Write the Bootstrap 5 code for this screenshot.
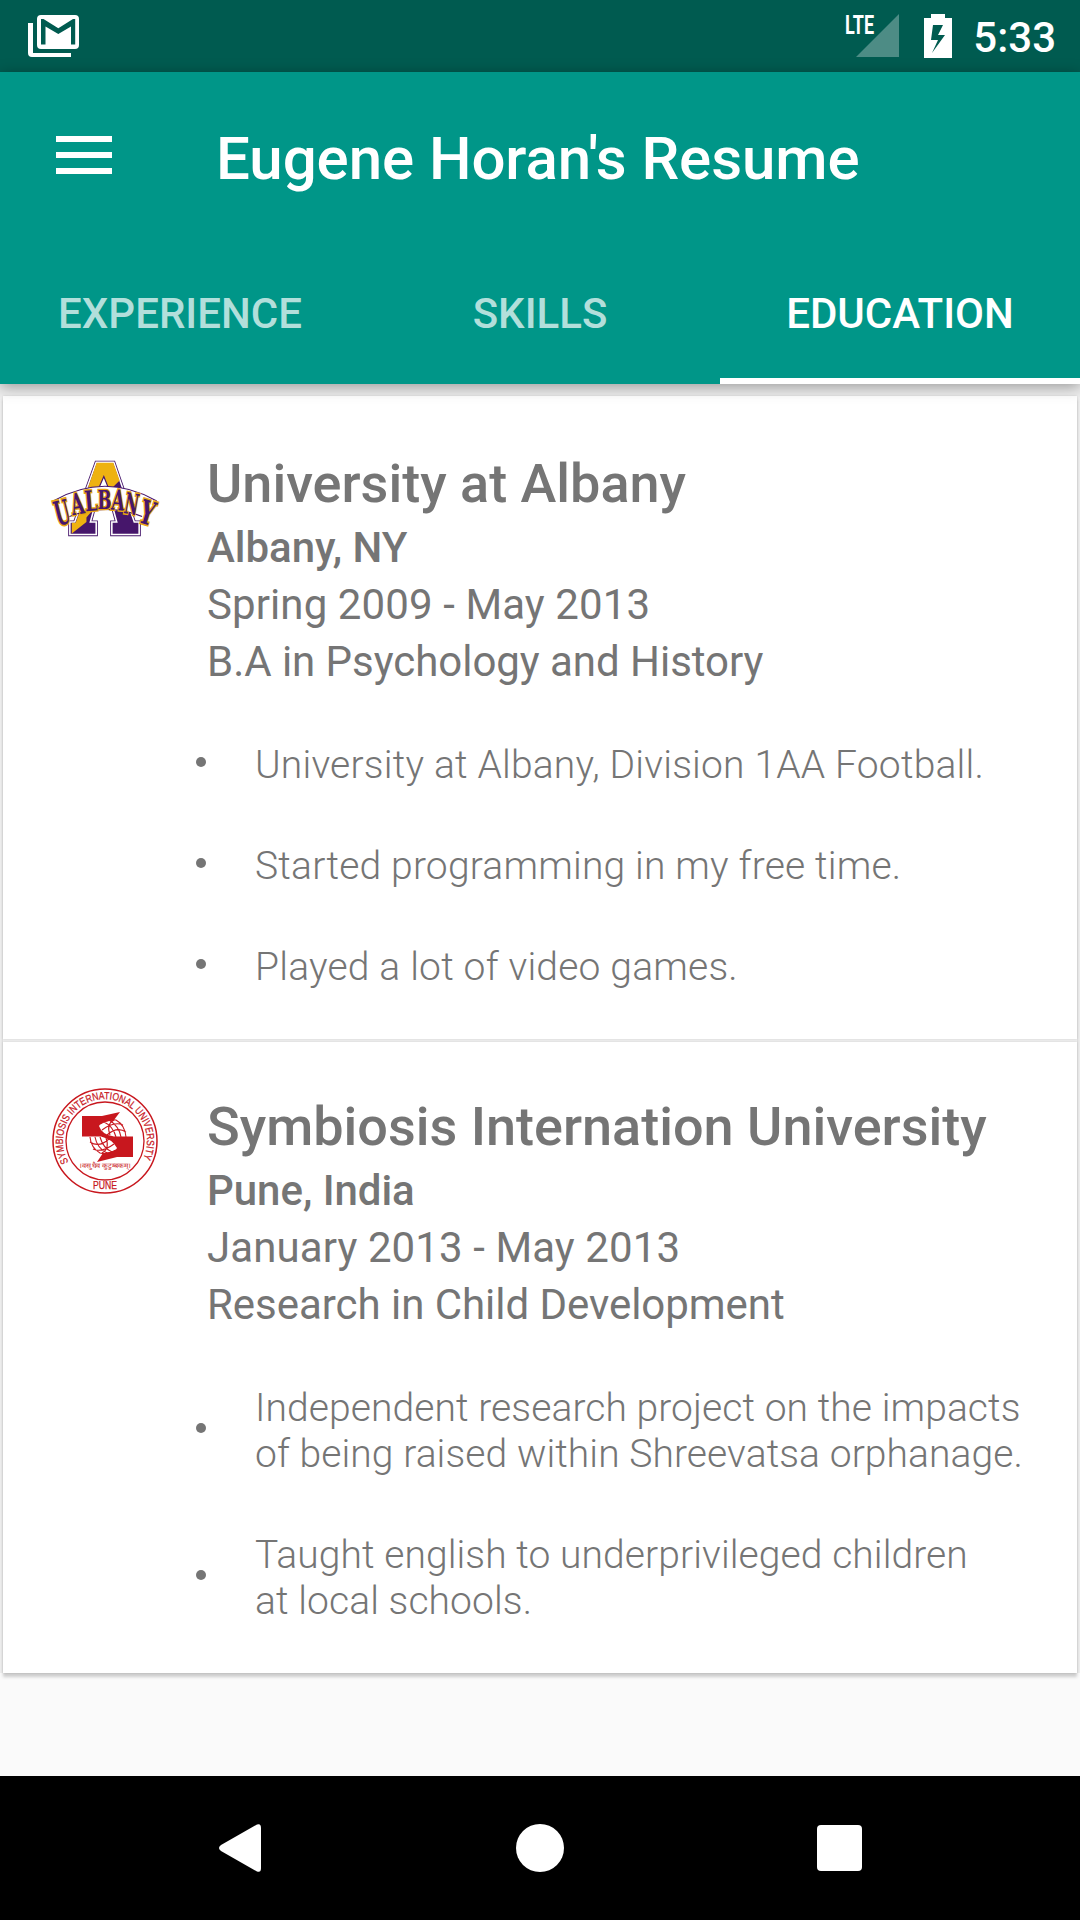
<!DOCTYPE html>
<html lang="en">
<head>
<meta charset="utf-8">
<meta name="viewport" content="width=device-width, initial-scale=1">
<title>Eugene Horan's Resume</title>
<link href="https://cdn.jsdelivr.net/npm/bootstrap@5.3.0/dist/css/bootstrap.min.css" rel="stylesheet">
<style>
body{font-family:Roboto,"Noto Sans",sans-serif;background:#fafafa;color:#757575;width:1080px;height:1920px;overflow:hidden}
svg{overflow:visible}
.statusbar{height:72px;background:#005b50}
.mail-icon{margin:-1px 0 0 28px}
.battery-icon{margin-left:25px}
.clock{font-size:42px;font-weight:500;line-height:50px;margin:4px 24px 0 21px}
.appbar{height:312px;background:#009688;box-shadow:0 3px 14px rgba(0,0,0,.36);z-index:2}
.toolbar{height:168px;padding-left:56px}
.menu-icon{margin-top:-2px}
.app-title{font-size:60px;font-weight:500;line-height:70px;margin:6px 0 0 104px;letter-spacing:-.07px}
.tabs .nav-link{height:144px;font-size:42px;font-weight:500;line-height:50px;color:#b2dfdb;border-bottom:6px solid transparent;border-radius:0;padding:9px 0 0}
.tabs .nav-link.active{color:#fff;border-bottom-color:#fff}
.sheet{background:#eee;padding:12px 3px 0}
.edu-card{background:#fff;box-shadow:0 0 2px rgba(0,0,0,.12)}
.edu-list{box-shadow:0 4px 3px rgba(0,0,0,.18)}
.first-card{height:643px;padding-top:56px;margin-bottom:3px}
.second-card{height:631px;padding-top:53px}
.logo-col{width:204px;padding-left:47px}
.first-card svg{margin-top:4px}
.second-card svg{margin-top:-9px}
.edu-name{font-size:54px;font-weight:500;line-height:63px;margin-bottom:4px}
.edu-line{font-size:42px;line-height:57px;letter-spacing:-.04px}
.edu-place{font-weight:500}
.edu-dates{letter-spacing:.1px}
.edu-points{margin:24px 0 0;padding:0}
.edu-points li{display:flex;align-items:center;padding:28px 0 27px 192px;font-size:39px;font-weight:300;line-height:46px;letter-spacing:.19px}
.second-card li{letter-spacing:.08px}
.dot{width:10px;height:10px;border-radius:50%;background:#757575;margin:-7px 49px 0 1px;flex:none}
.page-body{height:1392px}
.navbtns{height:144px;padding:0 90px}
</style>
</head>
<body class="d-flex flex-column">
<header class="statusbar d-flex align-items-center text-white flex-shrink-0">
  <svg class="mail-icon" width="52" height="43" viewBox="0 0 52 43" fill="#fff"><path d="M0 9h5v30h38v4H4q-4 0-4-4z"/><path fill-rule="evenodd" d="M13 1h34q4 0 4 4v26q0 4-4 4H13q-4 0-4-4V5q0-4 4-4zM13 5v25.500h4.500V12.500L30.300 20 43 12.500v18h4.200V5H45L30.300 14.300 15.500 5z"/></svg>
  <svg class="ms-auto" width="53" height="44" viewBox="0 0 53 44"><path d="M53 0v43H10z" fill="#4d8c85"/><text x="-1" y="19.500" font-size="26" font-weight="700" textLength="29" lengthAdjust="spacingAndGlyphs" fill="#fff">LTE</text></svg>
  <svg class="battery-icon" width="28" height="44" viewBox="0 0 28 44"><path fill="#fff" fill-rule="evenodd" d="M7 0h14v4h7v40H0V4h7zM9 11L7 26h7L8 39 21 21h-7l5-10z"/></svg>
  <span class="clock">5:33</span>
</header>
<div class="appbar position-relative text-white flex-shrink-0">
  <div class="toolbar d-flex align-items-center">
    <svg class="menu-icon" width="56" height="38" fill="#fff"><path d="M0 0h56v6H0zM0 16h56v6H0zM0 32h56v6H0z"/></svg>
    <h1 class="app-title">Eugene Horan's Resume</h1>
  </div>
  <nav class="tabs nav nav-fill row g-0">
    <a class="nav-link col-4 d-flex align-items-center justify-content-center">EXPERIENCE</a>
    <a class="nav-link col-4 d-flex align-items-center justify-content-center">SKILLS</a>
    <a class="nav-link active col-4 d-flex align-items-center justify-content-center">EDUCATION</a>
  </nav>
</div>
<main class="page-body">
  <div class="sheet"><div class="edu-list">
    <section class="edu-card first-card">
      <div class="d-flex">
        <div class="logo-col"><svg width="110" height="82" viewBox="-1 -1 112 84">
          <path d="M46 5.500H64L85 66.700H90V79.500H62V66.700H67L63 52H44L40 66.700H46V79.500H19V66.700H24z" fill="#46166b" stroke="#46166b" stroke-width="3.400"/>
          <path d="M46 5.500H64L85 66.700H90V79.500H62V66.700H67L63 52H44L40 66.700H46V79.500H19V66.700H24z" fill="#46166b" stroke="#fff" stroke-width="1.600"/>
          <path d="M46.500 6H63.500L70 24 58 36 36 62V66.700L21 78.500V67.500H25z" fill="#eeb211"/>
          <path d="M53.800 20L46 38H61z" fill="#fff" stroke="#46166b" stroke-width="1.200"/>
          <path d="M2 45Q55 15 108 45L98 63Q55 45 12 64z" fill="#fff"/>
          <path d="M2 45Q55 15 108 45M16 62Q55 46 93 61" fill="none" stroke="#46166b" stroke-width="1.200"/>
          <g font-family="DejaVu Serif,serif" font-weight="700" font-size="30" fill="#46166b" stroke="#e9a512" stroke-width="3" paint-order="stroke" text-anchor="middle">
            <text transform="translate(14 69) rotate(-14) scale(.58 1.150)">U</text><text transform="translate(28.500 58.500) rotate(-10) scale(.58 1)">A</text><text transform="translate(41.500 55) rotate(-5) scale(.62 .96)">L</text><text transform="translate(54.500 53) scale(.56 .92)">B</text><text transform="translate(67.500 54.500) rotate(5) scale(.58 .96)">A</text><text transform="translate(80.500 58.500) rotate(10) scale(.52 1)">N</text><text transform="translate(95 68.500) rotate(17) scale(.68 1.120)">Y</text>
          </g></svg></div>
        <div>
          <h2 class="edu-name">University at Albany</h2>
          <div class="edu-line edu-place">Albany, NY</div>
          <div class="edu-line edu-dates">Spring 2009 - May 2013</div>
          <div class="edu-line">B.A in Psychology and History</div>
        </div>
      </div>
      <ul class="edu-points">
        <li><span class="dot"></span><span>University at Albany, Division 1AA Football.</span></li>
        <li><span class="dot"></span><span>Started programming in my free time.</span></li>
        <li><span class="dot"></span><span>Played a lot of video games.</span></li>
      </ul>
    </section>
    <section class="edu-card second-card">
      <div class="d-flex">
        <div class="logo-col"><svg width="110" height="110" viewBox="0 0 110 110">
          <defs><path id="ring" d="M18.500 76A42 42 0 1 1 91.500 76"/></defs>
          <g fill="none" stroke="#c8171e"><circle cx="55" cy="55" r="52" stroke-width="1.500"/><circle cx="55" cy="55" r="39" stroke-width="1.300"/></g>
          <path d="M32 30H52L70 26 64 34Q50 36 49 40 52 49 64 50.500H83V71H67L47 76 53 67Q66 66 67 62 62 53 51 50.500H32z" fill="#c8171e"/>
          <g fill="none" stroke="#c8171e" stroke-width="1.100"><path d="M50 38Q58 33 66 34 75 39 76 51M54 36Q63 40 66 51M59 34Q69 40 71 51M64 34Q56 38 60 49M52 44Q64 35 73 39M57 49Q67 40 76 46"/><path d="M66 64Q58 69 50 67 41 62 40 51M62 66Q53 62 50 51M57 67Q47 62 45 51M52 67Q60 63 56 52M64 58Q52 67 43 63M59 53Q49 62 40 56"/></g>
          <g fill="#c8171e" font-family="Liberation Sans,sans-serif">
            <text font-size="10.500" stroke="#c8171e" stroke-width=".25"><textPath href="#ring" textLength="171" lengthAdjust="spacingAndGlyphs">SYMBIOSIS INTERNATIONAL UNIVERSITY</textPath></text>
            <text x="43" y="103" font-size="10" textLength="24" lengthAdjust="spacingAndGlyphs" stroke="#c8171e" stroke-width=".25">PUNE</text>
            <text x="29" y="82" font-size="7" textLength="52" lengthAdjust="spacingAndGlyphs">।वसुधैव कुटुम्बकम्।</text>
          </g>
        </svg></div>
        <div>
          <h2 class="edu-name">Symbiosis Internation University</h2>
          <div class="edu-line edu-place">Pune, India</div>
          <div class="edu-line edu-dates">January 2013 - May 2013</div>
          <div class="edu-line">Research in Child Development</div>
        </div>
      </div>
      <ul class="edu-points">
        <li><span class="dot"></span><span>Independent research project on the impacts<br>of being raised within Shreevatsa orphanage.</span></li>
        <li><span class="dot"></span><span>Taught english to underprivileged children<br>at local schools.</span></li>
      </ul>
    </section>
  </div></div>
</main>
<footer class="navbtns bg-black flex-shrink-0">
  <div class="row g-0 h-100 align-items-center">
    <div class="col-4 d-flex justify-content-center"><svg width="42" height="48" viewBox="0 0 42 48" fill="#fff"><path d="M38 .500Q42-1 42 4V44Q42 49 38 47.500L2 27Q-2 24 2 21z"/></svg></div>
    <div class="col-4 d-flex justify-content-center"><svg width="48" height="48" fill="#fff"><circle cx="24" cy="24" r="24"/></svg></div>
    <div class="col-4 d-flex justify-content-center"><svg width="45" height="46" fill="#fff"><rect width="45" height="46" rx="4"/></svg></div>
  </div>
</footer>
<script src="https://cdn.jsdelivr.net/npm/bootstrap@5.3.0/dist/js/bootstrap.bundle.min.js"></script>
</body>
</html>
